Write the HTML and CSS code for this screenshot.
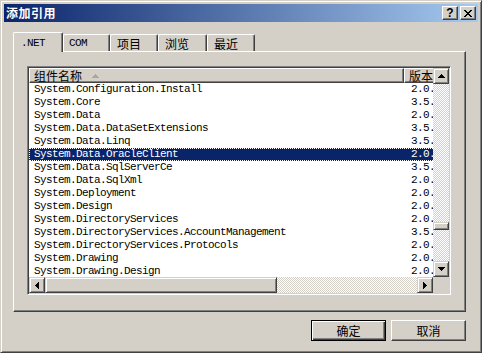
FILE: index.html
```html
<!DOCTYPE html>
<html>
<head>
  <meta charset="utf-8">
  <title>添加引用</title>
  <link rel="stylesheet" href="styles.css">
</head>
<body>
  <div class="window">
    <div class="titlebar">
      <span class="title">添加引用</span>
      <div class="caption-buttons">
        <div class="cap-btn help">?</div>
        <div class="cap-btn">
          <svg width="8" height="7" viewBox="0 0 8 7"><path d="M0 0h2v1H0z M6 0h2v1H6z M1 1h2v1H1z M5 1h2v1H5z M2 2h4v1H2z M3 3h2v1H3z M2 4h4v1H2z M1 5h2v1H1z M5 5h2v1H5z M0 6h2v1H0z M6 6h2v1H6z"/></svg>
        </div>
      </div>
    </div>

    <div class="dialog">
      <div class="tabs">
        <div class="tab active mono tab-net">.NET</div>
        <div class="tab mono tab-com">COM</div>
        <div class="tab tab-project">项目</div>
        <div class="tab tab-browse">浏览</div>
        <div class="tab tab-recent">最近</div>
      </div>

      <div class="panel">
        <div class="listview">
          <div class="lv-top">
            <div class="lv-view">
              <div class="lv-header">
                <div class="col-head col-name">组件名称
                  <svg class="sort-arrow" width="7" height="4" viewBox="0 0 7 4"><path d="M3 0h1v1H3z M2 1h3v1H2z M1 2h5v1H1z M0 3h7v1H0z"/></svg>
                </div>
                <div class="col-head col-version">版本</div>
              </div>
              <ul class="lv-rows">
                <li class="lv-row"><span class="cell-name">System.Configuration.Install</span><span class="cell-version">2.0.0.0</span></li>
                <li class="lv-row"><span class="cell-name">System.Core</span><span class="cell-version">3.5.0.0</span></li>
                <li class="lv-row"><span class="cell-name">System.Data</span><span class="cell-version">2.0.0.0</span></li>
                <li class="lv-row"><span class="cell-name">System.Data.DataSetExtensions</span><span class="cell-version">3.5.0.0</span></li>
                <li class="lv-row"><span class="cell-name">System.Data.Linq</span><span class="cell-version">3.5.0.0</span></li>
                <li class="lv-row selected"><span class="cell-name">System.Data.OracleClient</span><span class="cell-version">2.0.0.0</span></li>
                <li class="lv-row"><span class="cell-name">System.Data.SqlServerCe</span><span class="cell-version">3.5.0.0</span></li>
                <li class="lv-row"><span class="cell-name">System.Data.SqlXml</span><span class="cell-version">2.0.0.0</span></li>
                <li class="lv-row"><span class="cell-name">System.Deployment</span><span class="cell-version">2.0.0.0</span></li>
                <li class="lv-row"><span class="cell-name">System.Design</span><span class="cell-version">2.0.0.0</span></li>
                <li class="lv-row"><span class="cell-name">System.DirectoryServices</span><span class="cell-version">2.0.0.0</span></li>
                <li class="lv-row"><span class="cell-name">System.DirectoryServices.AccountManagement</span><span class="cell-version">3.5.0.0</span></li>
                <li class="lv-row"><span class="cell-name">System.DirectoryServices.Protocols</span><span class="cell-version">2.0.0.0</span></li>
                <li class="lv-row"><span class="cell-name">System.Drawing</span><span class="cell-version">2.0.0.0</span></li>
                <li class="lv-row"><span class="cell-name">System.Drawing.Design</span><span class="cell-version">2.0.0.0</span></li>
              </ul>
            </div>
            <div class="vscroll">
              <div class="sb-btn">
                <svg width="7" height="4" viewBox="0 0 7 4"><path d="M3 0h1v1H3z M2 1h3v1H2z M1 2h5v1H1z M0 3h7v1H0z"/></svg>
              </div>
              <div class="sb-track v-before"></div>
              <div class="sb-thumb v-thumb"></div>
              <div class="sb-track fill"></div>
              <div class="sb-btn">
                <svg width="7" height="4" viewBox="0 0 7 4"><path d="M0 0h7v1H0z M1 1h5v1H1z M2 2h3v1H2z M3 3h1v1H3z"/></svg>
              </div>
            </div>
          </div>
          <div class="lv-bottom">
            <div class="hscroll">
              <div class="sb-btn">
                <svg width="4" height="7" viewBox="0 0 4 7"><path d="M3 0h1v7H3z M2 1h1v5H2z M1 2h1v3H1z M0 3h1v1H0z"/></svg>
              </div>
              <div class="sb-thumb h-thumb"></div>
              <div class="sb-track fill"></div>
              <div class="sb-btn">
                <svg width="4" height="7" viewBox="0 0 4 7"><path d="M0 0h1v7H0z M1 1h1v5H1z M2 2h1v3H2z M3 3h1v1H3z"/></svg>
              </div>
            </div>
            <div class="sb-corner"></div>
          </div>
        </div>
      </div>

      <div class="buttons">
        <div class="push-btn default"><span>确定</span></div>
        <div class="push-btn"><span>取消</span></div>
      </div>
    </div>
  </div>
</body>
</html>
```

FILE: styles.css
```css
* {
  box-sizing: border-box;
}

body {
  margin: 0;
  background: #d4d0c8;
  font-family: "Noto Sans CJK SC", sans-serif;
  font-size: 12px;
  color: #000;
}

svg {
  display: block;
  shape-rendering: crispEdges;
}

.window {
  width: 482px;
  height: 353px;
  padding: 3px;
  background: #d4d0c8;
  border: 1px solid;
  border-color: #d4d0c8 #404040 #404040 #d4d0c8;
  box-shadow: inset 1px 1px #fff, inset -1px -1px #808080;
}

/* title bar */

.titlebar {
  height: 18px;
  display: flex;
  align-items: center;
  justify-content: space-between;
  padding-left: 2px;
  background: linear-gradient(to right, #0a246a, #a6caf0);
}

.title {
  color: #fff;
  font-weight: 700;
  line-height: 14px;
  letter-spacing: 0.5px;
}

.caption-buttons {
  display: flex;
  gap: 2px;
  padding-right: 2px;
}

.cap-btn {
  width: 16px;
  height: 14px;
  display: flex;
  align-items: center;
  justify-content: center;
  background: #d4d0c8;
  border: 1px solid;
  border-color: #fff #404040 #404040 #fff;
  box-shadow: inset -1px -1px #808080;
}

.cap-btn.help {
  font-family: "Liberation Sans", sans-serif;
  font-weight: 700;
  font-size: 12px;
  line-height: 12px;
}

/* dialog body */

.dialog {
  width: 462px;
  padding: 10px 0 0 9px;
}

.mono {
  font-family: "Liberation Mono", monospace;
  font-size: 11px;
  letter-spacing: -0.6px;
}

.tabs {
  display: flex;
  align-items: flex-end;
  height: 19px;
}

.tab {
  height: 17px;
  padding: 2px 0 0 6px;
  line-height: 13px;
  border-top: 1px solid #fff;
  border-left: 1px solid #fff;
  border-right: 1px solid #404040;
  border-radius: 2px 2px 0 0;
  box-shadow: inset -1px 0 #808080;
}

.tab.active {
  position: relative;
  z-index: 1;
  height: 20px;
  margin-bottom: -1px;
  padding: 4px 0 0 7px;
  background: #d4d0c8;
}

.tab-net { width: 50px; }
.tab-com { width: 47px; padding-left: 5px; }
.tab-project { width: 48px; }
.tab-browse { width: 49px; }
.tab-recent { width: 48px; }

.panel {
  width: 453px;
  height: 261px;
  padding: 14px 0 0 13px;
  border: 1px solid;
  border-color: #fff #404040 #404040 #fff;
  box-shadow: inset -1px -1px #808080;
}

/* list view */

.listview {
  width: 424px;
  height: 229px;
  padding: 1px;
  background: #d4d0c8;
  border: 1px solid;
  border-color: #808080 #fff #fff #808080;
  box-shadow: inset 1px 1px #404040;
}

.lv-top {
  display: flex;
  height: 209px;
}

.lv-view {
  width: 404px;
  overflow: hidden;
  background: #fff;
}

.lv-header {
  display: flex;
  width: 480px;
  height: 15px;
}

.col-head {
  display: flex;
  align-items: center;
  height: 15px;
  padding-left: 4px;
  line-height: 13px;
  background: #d4d0c8;
  border: 1px solid;
  border-color: #fff #404040 #404040 #fff;
  box-shadow: inset -1px -1px #808080;
}

.col-name {
  width: 375px;
}

.col-version {
  width: 105px;
}

.sort-arrow {
  margin-left: 10px;
  fill: #aca899;
}

.lv-rows {
  list-style: none;
  margin: 0;
  padding: 0;
  width: 480px;
}

.lv-row {
  display: flex;
  height: 13px;
  line-height: 13px;
  white-space: nowrap;
  font-family: "Liberation Mono", monospace;
  font-size: 11px;
  letter-spacing: -0.6px;
}

.lv-row.selected {
  background: #0a246a;
  color: #fff;
  outline: 1px dotted #fff;
  outline-offset: -1px;
}

.cell-name {
  width: 375px;
  padding-left: 5px;
}

.cell-version {
  padding-left: 7px;
}

/* scroll bars */

.vscroll {
  display: flex;
  flex-direction: column;
  width: 16px;
}

.lv-bottom {
  display: flex;
  height: 16px;
}

.hscroll {
  display: flex;
  width: 404px;
}

.sb-btn,
.sb-thumb {
  display: flex;
  align-items: center;
  justify-content: center;
  flex: none;
  width: 16px;
  height: 16px;
  background: #d4d0c8;
  border: 1px solid;
  border-color: #d4d0c8 #404040 #404040 #d4d0c8;
  box-shadow: inset 1px 1px #fff, inset -1px -1px #808080;
}

.sb-track {
  background: repeating-conic-gradient(#fff 0 25%, #d4d0c8 0 50%) 0 0 / 2px 2px;
}

.sb-track.fill {
  flex: 1;
}

.v-before {
  height: 138px;
}

.v-thumb {
  height: 8px;
}

.h-thumb {
  width: 232px;
}

.sb-corner {
  width: 16px;
  background: #d4d0c8;
}

/* push buttons */

.buttons {
  display: flex;
  justify-content: flex-end;
  gap: 5px;
  width: 453px;
  margin-top: 8px;
}

.push-btn {
  width: 75px;
  height: 21px;
  display: flex;
  align-items: center;
  justify-content: center;
  line-height: 13px;
  border: 1px solid;
  border-color: #fff #404040 #404040 #fff;
  box-shadow: inset -1px -1px #808080;
}

.push-btn.default {
  border-color: #000;
  box-shadow: inset 1px 1px #fff, inset -1px -1px #404040, inset -2px -2px #808080;
}
```
